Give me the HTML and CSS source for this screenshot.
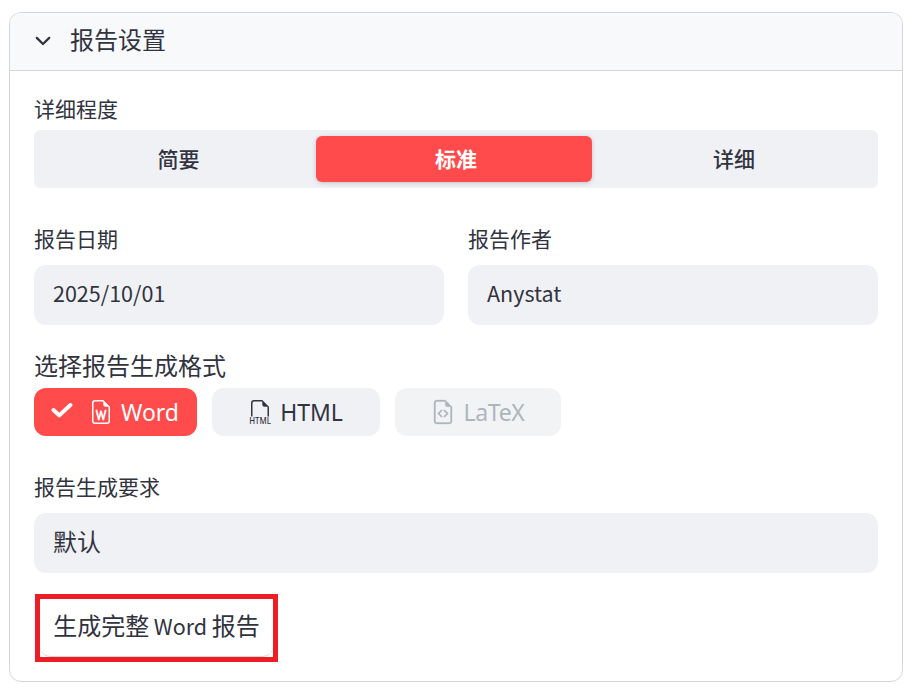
FILE: index.html
```html
<!DOCTYPE html>
<html lang="zh-CN">
<head>
<meta charset="utf-8">
<title>报告设置</title>
<link rel="stylesheet" href="styles.css">
</head>
<body>
<main class="panel">
  <header class="panel-header">
    <svg class="chevron" viewBox="0 0 24 24"><path d="M5.800 8.900 12 15l6.200-6.100"/></svg>
    <h1>报告设置</h1>
  </header>
  <div class="panel-body">
    <div class="label">详细程度</div>
    <div class="segments">
      <button class="segment">简要</button>
      <button class="segment selected">标准</button>
      <button class="segment">详细</button>
    </div>
    <div class="columns">
      <div class="field">
        <div class="label">报告日期</div>
        <div class="input">2025/10/01</div>
      </div>
      <div class="field">
        <div class="label">报告作者</div>
        <div class="input">Anystat</div>
      </div>
    </div>
    <h2>选择报告生成格式</h2>
    <div class="formats">
      <button class="format word">
        <svg class="check" viewBox="0 0 22 16"><path d="m2.500 8 5.800 5.400L19.400 3"/></svg>
        <svg class="icon" viewBox="0 0 16 16"><path stroke="currentColor" stroke-width=".25" d="M5.485 6.879a.5.5 0 1 0-.97.242l1.500 6a.5.5 0 0 0 .967.01L8 9.402l1.018 3.730a.5.5 0 0 0 .967-.01l1.500-6a.5.5 0 0 0-.97-.242l-1.036 4.144-.997-3.655a.5.5 0 0 0-.964 0l-.997 3.655z"/><path d="M14 14V4.500L9.500 0H4a2 2 0 0 0-2 2v12a2 2 0 0 0 2 2h8a2 2 0 0 0 2-2M9.500 3A1.500 1.500 0 0 0 11 4.500h2V14a1 1 0 0 1-1 1H4a1 1 0 0 1-1-1V2a1 1 0 0 1 1-1h5.500z"/></svg>
        <span>Word</span>
      </button>
      <button class="format html">
        <svg class="icon" viewBox="0 0 16 16"><path d="M14 4.500V11h-1V4.500h-2A1.500 1.500 0 0 1 9.500 3V1H4a1 1 0 0 0-1 1v9H2V2a2 2 0 0 1 2-2h5.500z"/><text x="8" y="16" text-anchor="middle" textLength="14.5" lengthAdjust="spacingAndGlyphs">HTML</text></svg>
        <span>HTML</span>
      </button>
      <button class="format latex" disabled>
        <svg class="icon" viewBox="0 0 16 16"><path stroke="currentColor" stroke-width=".2" d="M14 4.500V14a2 2 0 0 1-2 2H4a2 2 0 0 1-2-2V2a2 2 0 0 1 2-2h5.500zm-3 0A1.500 1.500 0 0 1 9.500 3V1H4a1 1 0 0 0-1 1v12a1 1 0 0 0 1 1h8a1 1 0 0 0 1-1V4.500z"/><path stroke="currentColor" stroke-width=".2" d="M8.646 6.646a.5.5 0 0 1 .708 0l2 2a.5.5 0 0 1 0 .708l-2 2a.5.5 0 0 1-.708-.708L10.293 9 8.646 7.354a.5.5 0 0 1 0-.708m-1.292 0a.5.5 0 0 0-.708 0l-2 2a.5.5 0 0 0 0 .708l2 2a.5.5 0 0 0 .708-.708L5.707 9l1.647-1.646a.5.5 0 0 0 0-.708"/></svg>
        <span>LaTeX</span>
      </button>
    </div>
    <div class="label">报告生成要求</div>
    <div class="input request">默认</div>
    <div class="highlight"><button class="generate">生成完整 <span>Word</span> 报告</button></div>
  </div>
</main>
</body>
</html>
```
FILE: styles.css
```css
* { box-sizing: border-box; }
body {
  margin: 0;
  background: #fff;
  color: #31333f;
  font-family: "Noto Sans CJK SC", sans-serif;
}
button { margin: 0; padding: 0; border: 0; color: inherit; font-family: inherit; }
h1, h2 { margin: 0; font-size: 24px; font-weight: 400; }
.panel {
  width: 894px;
  height: 670px;
  margin: 12px 0 0 9px;
  border: 1px solid #d5d6d9;
  border-radius: 12px;
  overflow: hidden;
}
.panel-header {
  display: flex;
  align-items: center;
  height: 58px;
  padding: 0 0 2px 21px;
  background: #f8f9fb;
  border-bottom: 1px solid #d5d6d9;
}
.panel-header h1 { margin-left: 15px; padding-bottom: 4px; line-height: 36px; }
.chevron {
  width: 24px;
  height: 24px;
  fill: none;
  stroke: #31333f;
  stroke-width: 2.3;
  stroke-linecap: round;
  stroke-linejoin: round;
}
.panel-body { padding: 22px 24px 0; }
.label { height: 32px; font-size: 21px; line-height: 30px; }
.segments {
  display: grid;
  grid-template-columns: 276px 276px 280px;
  height: 58px;
  margin-top: 5px;
  padding: 6px;
  background: #f0f1f5;
  border-radius: 6px;
}
.segment {
  padding: 0 0 3px 4px;
  background: none;
  border-radius: 6px;
  font-size: 21px;
  font-weight: 500;
  line-height: 32px;
}
.segment:first-child { padding-left: 1px; }
.segment.selected {
  background: #ff4b4b;
  color: #fff;
  font-weight: 700;
  box-shadow: 0 1px 4px rgba(49, 51, 63, .25);
}
.columns { display: grid; grid-template-columns: 1fr 1fr; gap: 24px; margin-top: 35px; }
.input {
  height: 60px;
  margin-top: 10px;
  padding-left: 19px;
  background: #f0f1f5;
  border-radius: 12px;
  font-size: 21.500px;
  line-height: 56px;
}
h2 { height: 36px; margin-top: 23px; line-height: 34px; }
.formats { display: flex; gap: 15px; margin-top: 4px; margin-bottom: 35px; }
.format {
  display: flex;
  align-items: center;
  justify-content: center;
  height: 48px;
  background: #f0f1f5;
  border-radius: 12px;
  font-family: "Noto Sans", sans-serif;
  font-size: 23px;
  line-height: 36px;
}
.format span { margin-left: 8px; }
.word { width: 163px; padding-right: 1px; background: #ff4b4b; color: #fff; }
.html { width: 168px; padding-right: 1px; }
.latex { width: 166px; background: #f1f3f5; color: #adb5bd; }
.latex span { letter-spacing: -.3px; }
.check {
  width: 22px;
  height: 16px;
  margin-right: 16px;
  margin-bottom: 4px;
  fill: none;
  stroke: currentColor;
  stroke-width: 4;
  stroke-linecap: round;
  stroke-linejoin: round;
}
.icon { width: 24px; height: 24px; fill: currentColor; overflow: visible; }
.icon text { font: 500 5.700px "Noto Sans", sans-serif; }
.request { font-size: 24px; line-height: 55px; }
.highlight {
  width: 243px;
  height: 68px;
  margin: 21px 0 0 1px;
  border: 5px solid #ee1c25;
}
.generate {
  display: block;
  width: 233px;
  height: 58px;
  padding-bottom: 5px;
  background: #fff;
  border-bottom: 1px solid #d5d6d9;
  border-radius: 0 0 10px 10px;
  font-size: 24px;
  line-height: 36px;
  white-space: nowrap;
  word-spacing: -.8px;
}
.generate span { font-size: 21.500px; }
```
